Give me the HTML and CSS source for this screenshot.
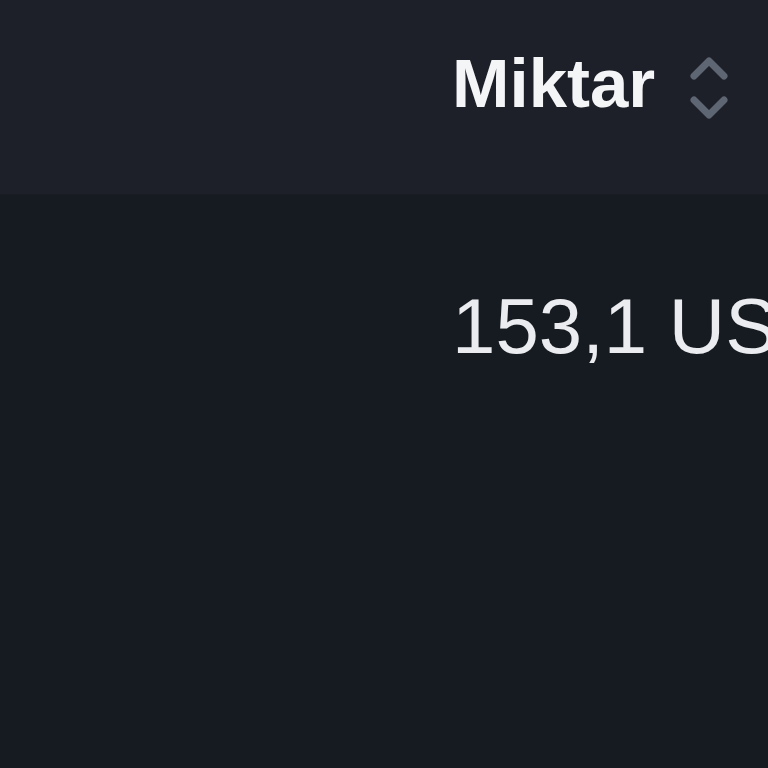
FILE: index.html
```html
<!DOCTYPE html>
<html lang="tr">
<head>
    <meta charset="UTF-8">
    <meta name="viewport" content="width=device-width, initial-scale=1.0">
    <title>Miktar</title>
    <link rel="stylesheet" href="styles.css">
</head>
<body>
    <div class="orders-table">
        <div class="table-head">
            <div class="cell-spacer"></div>
            <div class="head-cell">
                <span class="head-label">Miktar</span>
                <svg class="sort-icon" viewBox="0 0 44 72">
                    <path d="M7 24 L22 9 L37 24" />
                    <path d="M7 48 L22 63 L37 48" />
                </svg>
            </div>
        </div>
        <div class="table-row">
            <div class="cell-spacer"></div>
            <div class="amount-cell">153,1 USDT</div>
        </div>
    </div>
</body>
</html>
```

FILE: styles.css
```css
html, body {
    margin: 0;
    padding: 0;
    height: 100%;
    background-color: #161a21;
    font-family: "Liberation Sans", Arial, sans-serif;
    overflow: hidden;
}
.orders-table {
    width: 100%;
}
.table-head {
    display: flex;
    align-items: center;
    height: 194px;
    background-color: #1e2029;
    border-bottom: 1px solid #191c23;
}
.cell-spacer {
    width: 452px;
    flex-shrink: 0;
}
.head-cell {
    display: flex;
    align-items: center;
    gap: 32px;
    margin-top: -28px;
    white-space: nowrap;
}
.head-label {
    font-size: 69px;
    font-weight: bold;
    color: #f4f5f7;
}
.sort-icon {
    width: 44px;
    height: 72px;
    margin-top: 10px;
    fill: none;
    stroke: #5e6573;
    stroke-width: 7;
    stroke-linecap: round;
    stroke-linejoin: round;
}
.table-row {
    display: flex;
    padding-top: 86px;
}
.amount-cell {
    font-size: 78px;
    color: #eaecef;
    white-space: nowrap;
    overflow: hidden;
}
```
